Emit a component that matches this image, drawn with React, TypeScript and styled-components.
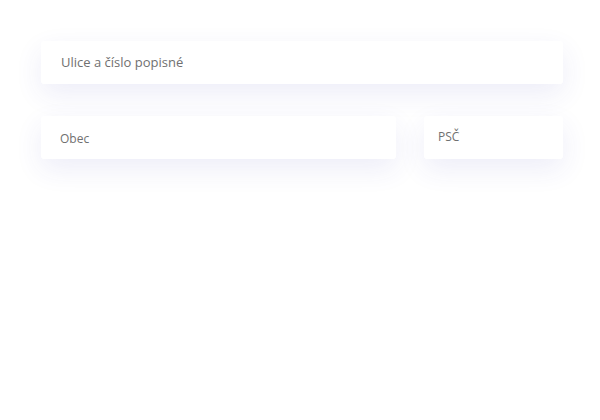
import React from "react";
import styled, { createGlobalStyle } from "styled-components";

const Global = createGlobalStyle`
  html, body { margin: 0; padding: 0; background: #ffffff; }
  body { font-family: "Open Sans", "Noto Sans", sans-serif; }
`;

const Form = styled.form`
  display: flex;
  flex-direction: column;
  gap: 32px;
  width: 522px;
  padding: 41px 0 40px 41px;
`;

const Row = styled.div`
  display: flex;
  gap: 28px;
`;

const Field = styled.input<{ $size: number; $pad: number; $shift?: number; $grow?: number; $width?: number }>`
  box-sizing: border-box;
  display: block;
  height: 43px;
  margin: 0;
  border: none;
  outline: none;
  border-radius: 3px;
  background: #ffffff;
  box-shadow: 0 10px 28px rgba(60, 50, 180, 0.09);
  font-family: "Open Sans", "Noto Sans", sans-serif;
  font-size: ${(p) => p.$size}px;
  color: #666;
  padding: ${(p) => Math.max(0, -(p.$shift ?? 0))}px 12px ${(p) => Math.max(0, p.$shift ?? 0)}px ${(p) => p.$pad}px;
  flex: ${(p) => (p.$grow ? `${p.$grow} 1 0` : "0 0 auto")};
  width: ${(p) => (p.$width ? `${p.$width}px` : "auto")};
  min-width: 0;
  &::placeholder { color: #707070; opacity: 1; }
`;

export default function App() {
  return (
    <>
      <Global />
      <Form onSubmit={(e) => e.preventDefault()}>
        <Field $size={13} $pad={20} $shift={2} placeholder="Ulice a číslo popisné" />
        <Row>
          <Field $size={12} $pad={19} $shift={-2} $grow={1} placeholder="Obec" />
          <Field $size={12} $pad={14} $shift={3} $width={139} placeholder="PSČ" />
        </Row>
      </Form>
    </>
  );
}
